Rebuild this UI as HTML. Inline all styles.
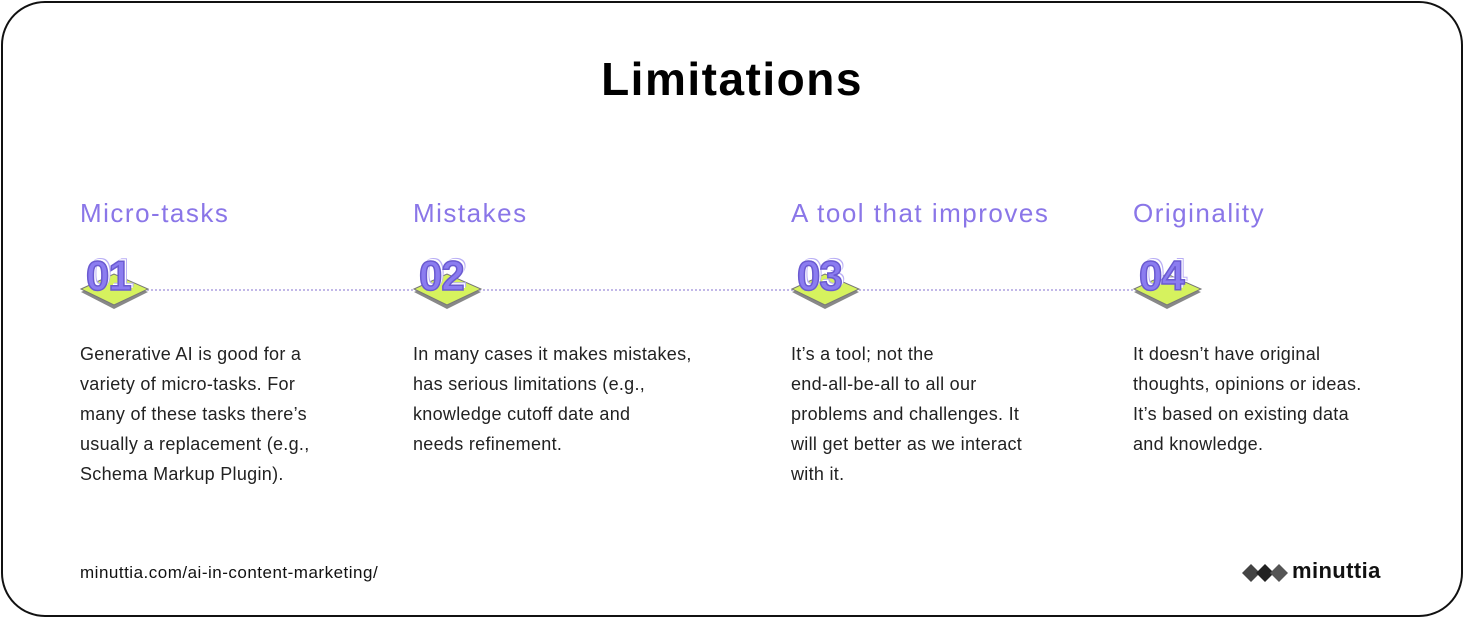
<!DOCTYPE html>
<html><head><style>
body{margin:0;width:1464px;height:618px;background:#fff;font-family:"Liberation Sans",sans-serif;overflow:hidden}
.card{position:absolute;left:1px;top:1px;width:1458px;height:612px;border:2px solid #111;border-radius:44px}
h1{position:absolute;left:0;width:1464px;top:52px;margin:0;text-align:center;font-size:46px;letter-spacing:1.5px;font-weight:bold;color:#000}
.t{position:absolute;top:198px;font-size:26px;letter-spacing:1.5px;color:#8a76e8}
.b{position:absolute;top:339px;font-size:18px;letter-spacing:0.3px;line-height:30px;color:#222}
.line{position:absolute;left:140px;width:1000px;top:289px;border-top:2px dotted #c2b8e8}
.badge{position:absolute;top:252px;width:72px;height:62px}
.n{position:absolute;left:7px;top:0;font-size:42px;font-weight:bold;color:#8b7cf0;-webkit-text-stroke:1.5px #6a5ad0;text-shadow:2px -2px 0 #fff,3px -3px 0 #b9aef5;letter-spacing:-1px}
.foot{position:absolute;left:80px;top:563px;font-size:17px;letter-spacing:0.5px;color:#111}
.logo{position:absolute;left:1242px;top:560px}
</style></head><body>
<div class="card"></div>
<h1>Limitations</h1>
<div class="line"></div>
<div class="t" style="left:80px">Micro-tasks</div>
<div class="t" style="left:413px">Mistakes</div>
<div class="t" style="left:791px">A tool that improves</div>
<div class="t" style="left:1133px">Originality</div>

<div class="badge" style="left:79px"><svg width="72" height="62" style="position:absolute;left:0;top:0"><polygon points="2,40 35,25 69,40 35,57" fill="#888"/><polygon points="2,37 35,22 69,37 35,53" fill="#d6f25e" stroke="#777" stroke-width="1"/></svg><div class="n">01</div></div>
<div class="badge" style="left:412px"><svg width="72" height="62" style="position:absolute;left:0;top:0"><polygon points="2,40 35,25 69,40 35,57" fill="#888"/><polygon points="2,37 35,22 69,37 35,53" fill="#d6f25e" stroke="#777" stroke-width="1"/></svg><div class="n">02</div></div>
<div class="badge" style="left:790px"><svg width="72" height="62" style="position:absolute;left:0;top:0"><polygon points="2,40 35,25 69,40 35,57" fill="#888"/><polygon points="2,37 35,22 69,37 35,53" fill="#d6f25e" stroke="#777" stroke-width="1"/></svg><div class="n">03</div></div>
<div class="badge" style="left:1132px"><svg width="72" height="62" style="position:absolute;left:0;top:0"><polygon points="2,40 35,25 69,40 35,57" fill="#888"/><polygon points="2,37 35,22 69,37 35,53" fill="#d6f25e" stroke="#777" stroke-width="1"/></svg><div class="n">04</div></div>

<div class="b" style="left:80px">Generative AI is good for a<br>variety of micro-tasks. For<br>many of these tasks there’s<br>usually a replacement (e.g.,<br>Schema Markup Plugin).</div>
<div class="b" style="left:413px">In many cases it makes mistakes,<br>has serious limitations (e.g.,<br>knowledge cutoff date and<br>needs refinement.</div>
<div class="b" style="left:791px">It’s a tool; not the<br>end-all-be-all to all our<br>problems and challenges. It<br>will get better as we interact<br>with it.</div>
<div class="b" style="left:1133px">It doesn’t have original<br>thoughts, opinions or ideas.<br>It’s based on existing data<br>and knowledge.</div>

<div class="foot">minuttia.com/ai-in-content-marketing/</div>
<div class="logo"><svg width="50" height="26"><g><polygon points="0,13 9,4 18,13 9,22" fill="#444"/><polygon points="14,13 23,4 32,13 23,22" fill="#222"/><polygon points="28,13 37,4 46,13 37,22" fill="#555"/></g></svg><span style="position:absolute;left:50px;top:-2px;font-size:22px;letter-spacing:0.4px;font-weight:bold;color:#111">minuttia</span></div>
</body></html>
